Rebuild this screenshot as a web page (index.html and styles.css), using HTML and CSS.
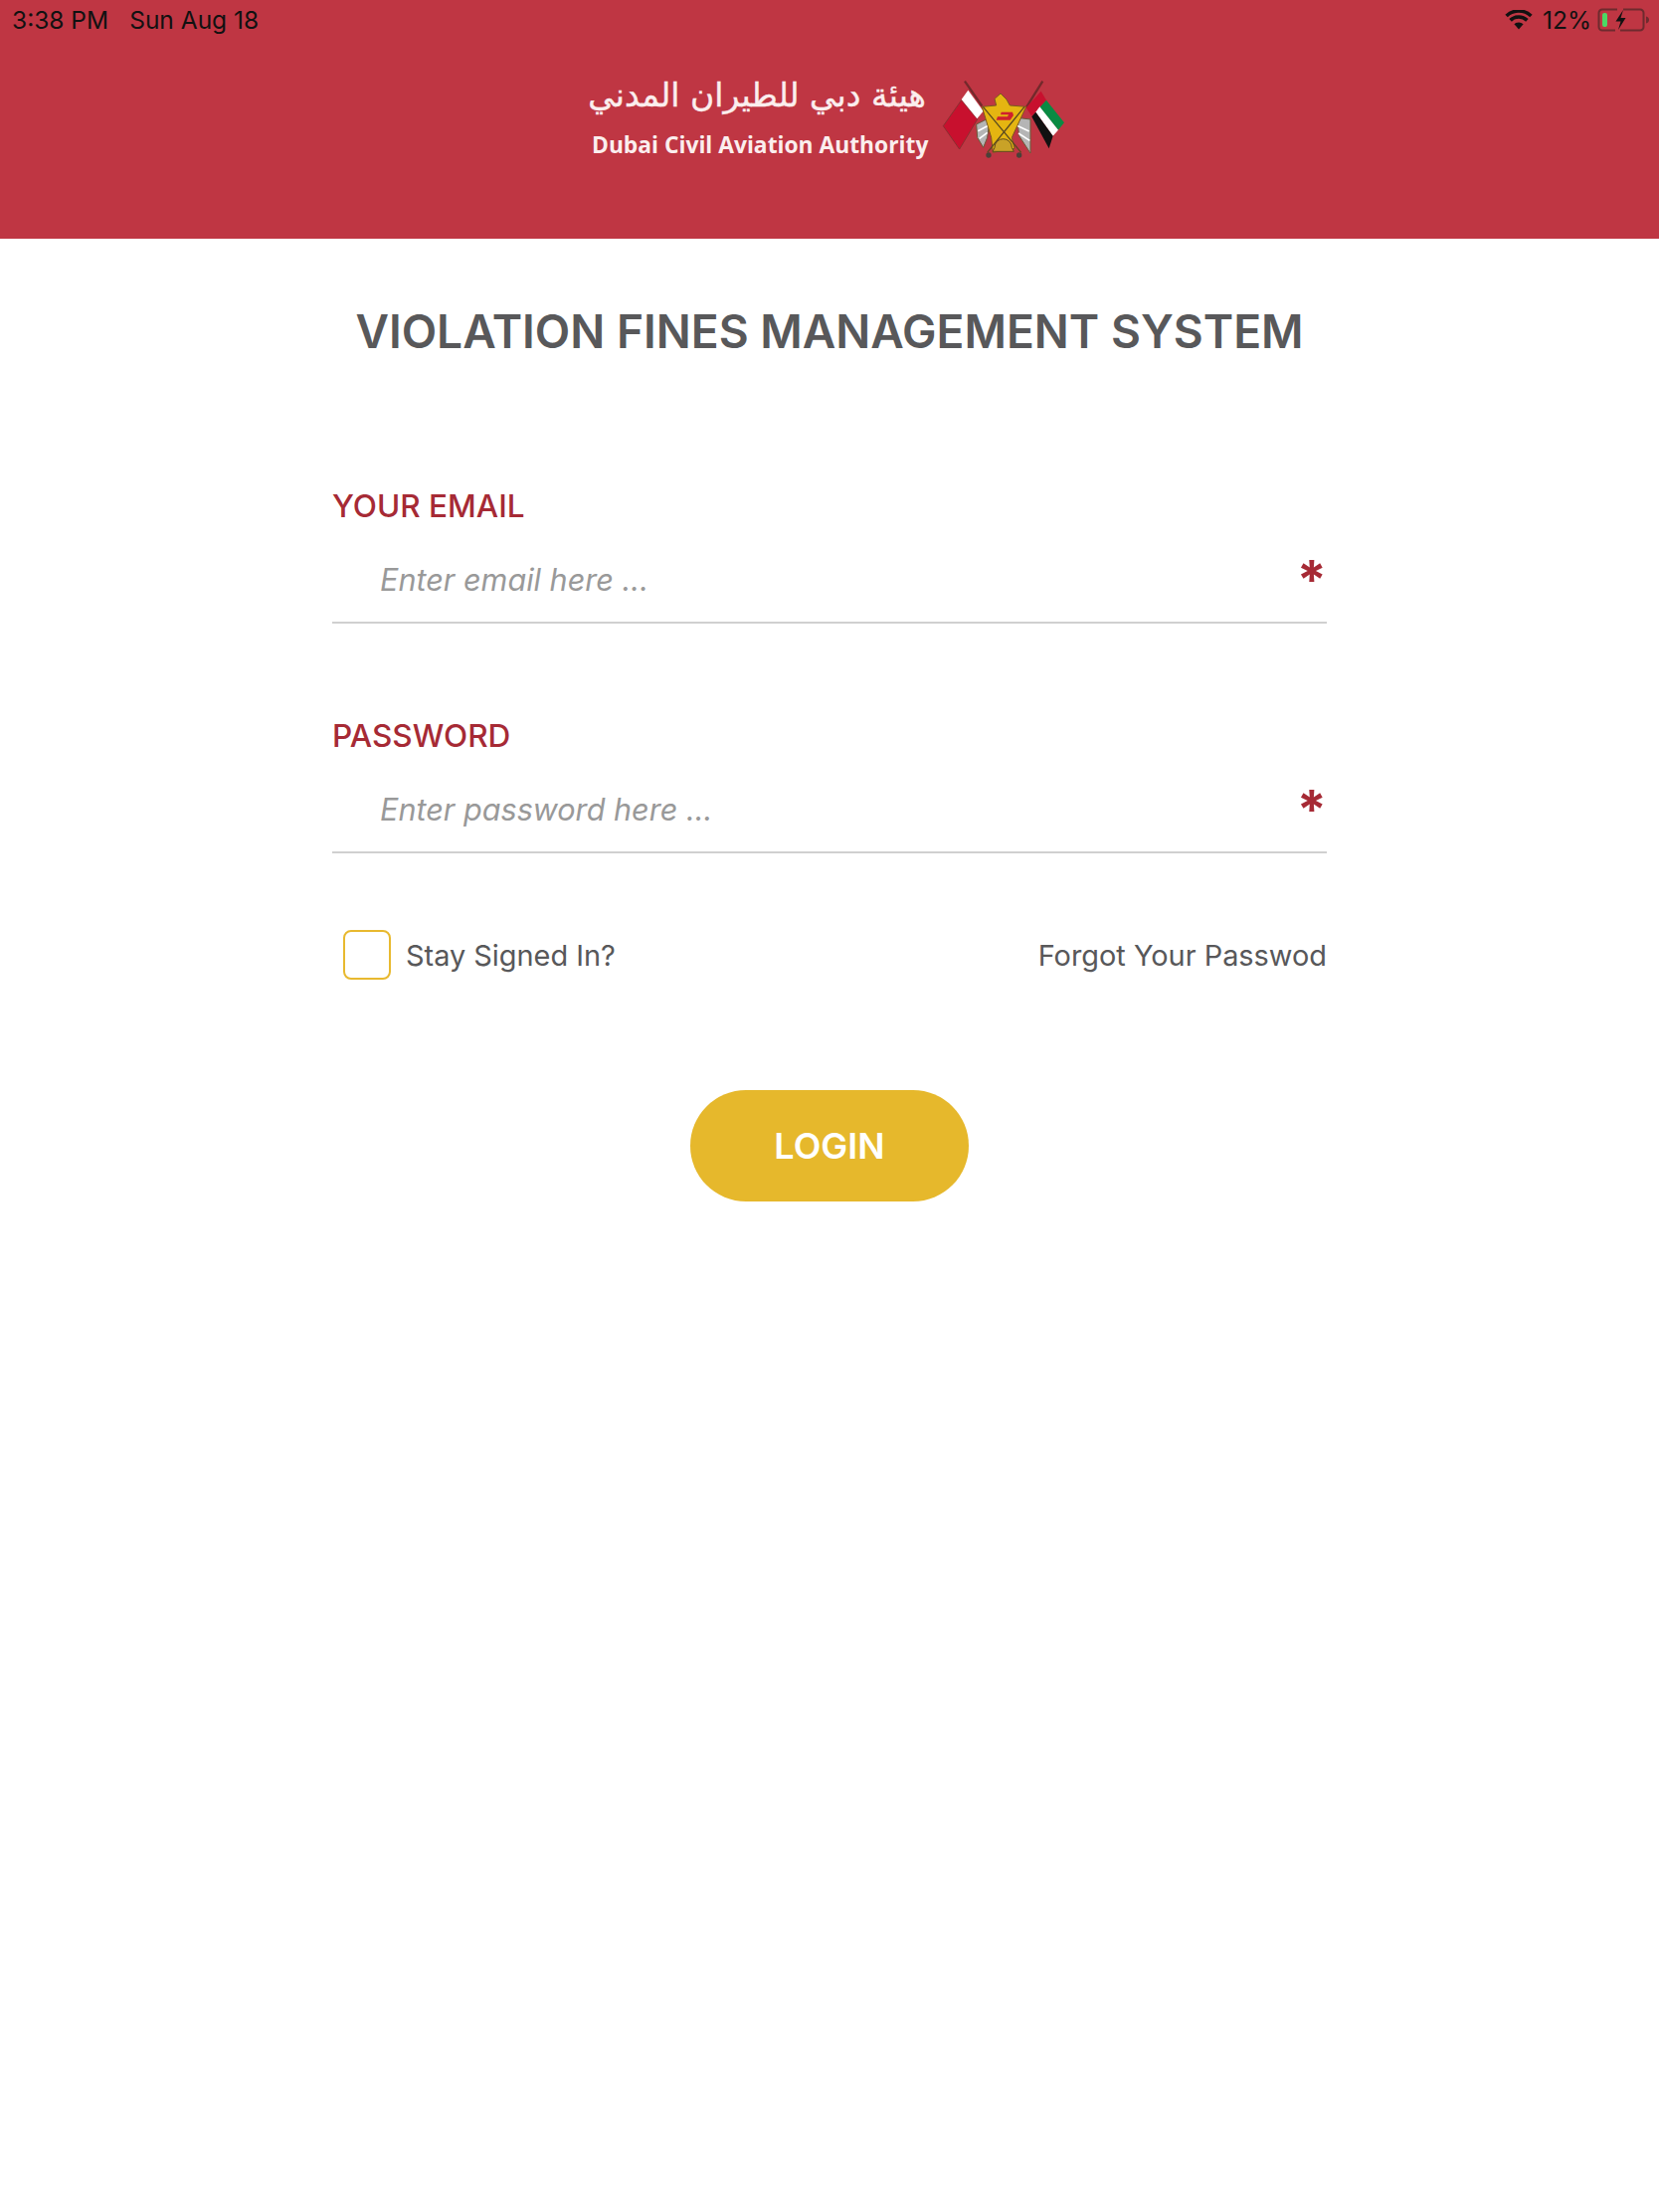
FILE: index.html
```html
<!DOCTYPE html>
<html>
<head>
  <title>Violation Fines Management System</title>
  <link rel="stylesheet" href="styles.css">
</head>
<body>
  <header class="header">
    <div class="status-bar">
      <div class="status-left">
        <span>3:38 PM</span>
        <span>Sun Aug 18</span>
      </div>
      <div class="status-right">
        <svg class="wifi" viewBox="0 0 28 20">
          <path d="M14 19.500 9.400 14.200a7 7 0 0 1 9.200 0Z" fill="#111"/>
          <path d="M5.600 10.400a12 12 0 0 1 16.800 0M1.600 6a18 18 0 0 1 24.800 0" fill="none" stroke="#111" stroke-width="3.600"/>
        </svg>
        <span>12%</span>
        <svg class="battery" viewBox="0 0 52 24">
          <path d="M20 1.500H5a3.500 3.500 0 0 0-3.500 3.500v14A3.500 3.500 0 0 0 5 22.500h13M26 1.500h17a3.500 3.500 0 0 1 3.500 3.500v14a3.500 3.500 0 0 1-3.500 3.500H23" fill="none" stroke="#6e2a2e" stroke-width="2"/>
          <rect x="5" y="5" width="5" height="14" rx="2" fill="#4cd964"/>
          <path d="M49 8.500c2 .5 3 1.500 3 3.500s-1 3-3 3.500Z" fill="#6e2a2e"/>
          <path d="M26 2 18.500 13.500h5L21 22 28.500 10h-5Z" fill="#111"/>
        </svg>
      </div>
    </div>
    <div class="logo">
      <div class="logo-text">
        <div class="logo-ar" dir="rtl">هيئة دبي للطيران المدني</div>
        <div class="logo-en">Dubai Civil Aviation Authority</div>
      </div>
      <svg class="emblem" viewBox="0 0 450 300">
        <path d="M120 35 172 110M355 35 305 115" stroke="#73292b" stroke-width="7" fill="none"/>
        <path d="M55 170 110 92 158 150 104 240Z" fill="#c8102e" stroke="#8a2f30" stroke-width="3"/>
        <path d="M110 90 130 62 176 125 157 148Z" fill="#fff"/>
        <path d="M305 115 350 65 366 92 322 140Z" fill="#c8102e"/>
        <path d="M366 92 420 160 402 182 346 114Z" fill="#0b8a43"/>
        <path d="M346 112 402 182 386 200 334 128Z" fill="#fff"/>
        <path d="M334 128 386 200 374 238 322 142Z" fill="#111"/>
        <path d="M155 165 196 145 188 205 176 235 158 205Z" fill="#b5b5b5" stroke="#6a5a3a" stroke-width="3"/>
        <path d="M318 150 278 145 284 200 318 252Z" fill="#b5b5b5" stroke="#6a5a3a" stroke-width="3"/>
        <path d="M160 185 192 168M164 208 188 190M276 168 314 186M282 192 316 214" stroke="#fff" stroke-width="5" fill="none"/>
        <path d="M210 88 228 72 246 90 256 108 305 112 262 205 270 238 205 250 200 205 172 112 215 108Z" fill="#e5b511" stroke="#7a5a1e" stroke-width="3"/>
        <path d="M230 128h34l3 10-10 14h-42l4-10h30l3-6h-24Z" fill="#cf1f2e"/>
        <path d="M175 112 290 250M300 112 188 250" stroke="#5a4a20" stroke-width="4" fill="none"/>
        <path d="M210 235a26 26 0 0 1 52 0l6 12h-64Z" fill="#c9a227" stroke="#5f4a1e" stroke-width="3"/>
        <circle cx="192" cy="258" r="8" fill="#4a4038"/>
        <circle cx="284" cy="258" r="8" fill="#4a4038"/>
      </svg>
    </div>
  </header>

  <main class="container">
    <h1 class="title">VIOLATION FINES MANAGEMENT SYSTEM</h1>

    <div class="field field-email">
      <label class="field-label" for="email">YOUR EMAIL</label>
      <div class="input-row">
        <input class="field-input" id="email" type="text" placeholder="Enter email here ...">
        <span class="required">*</span>
      </div>
    </div>

    <div class="field field-password">
      <label class="field-label" for="password">PASSWORD</label>
      <div class="input-row">
        <input class="field-input" id="password" type="text" placeholder="Enter password here ...">
        <span class="required">*</span>
      </div>
    </div>

    <div class="options">
      <label class="stay-signed">
        <span class="checkbox"></span>
        Stay Signed In?
      </label>
      <a class="forgot">Forgot Your Passwod</a>
    </div>

    <div class="actions">
      <button class="login-button">LOGIN</button>
    </div>
  </main>
</body>
</html>
```

FILE: styles.css
```css
body {
  margin: 0;
  min-height: 2224px;
  background-color: #fff;
  font-family: Inter, "Noto Sans", sans-serif;
  color: #58585a;
}

.header {
  height: 240px;
  background-color: #bf3643;
}

.status-bar {
  height: 40px;
  padding: 0 10px 0 12px;
  display: flex;
  justify-content: space-between;
  align-items: center;
  font-size: 24.5px;
  color: #111;
}

.status-left {
  display: flex;
  gap: 21px;
}

.status-right {
  display: flex;
  align-items: center;
}

.wifi {
  width: 28px;
  height: 20px;
  margin-right: 10px;
}

.battery {
  width: 52px;
  height: 24px;
  margin-left: 6px;
}

.logo {
  display: flex;
  justify-content: center;
  align-items: center;
  margin-top: 30px;
  height: 100px;
  padding-left: 4px;
}

.logo-text {
  width: 338px;
  padding-bottom: 4px;
  color: #fbeeee;
}

.logo-ar {
  font-family: "DejaVu Sans", sans-serif;
  font-size: 33px;
  line-height: 44px;
  white-space: nowrap;
  margin-right: -1px;
  -webkit-text-stroke: 0.4px #fbeeee;
}

.logo-en {
  font-family: "Open Sans", sans-serif;
  font-weight: 700;
  font-size: 22.8px;
  line-height: 34px;
  margin-top: 11px;
  padding-left: 3px;
  white-space: nowrap;
}

.emblem {
  width: 150px;
  height: 100px;
}

.container {
  width: 1000px;
  margin: 0 auto;
}

.title {
  margin: 0;
  padding-top: 63px;
  font-size: 46.1px;
  line-height: 60px;
  font-weight: 600;
  text-align: center;
  white-space: nowrap;
}

.field-email {
  margin-top: 127px;
}

.field-password {
  margin-top: 94px;
}

.field-label {
  display: block;
  font-size: 31.5px;
  line-height: 38px;
  font-weight: 550;
  color: #a62a35;
}

.input-row {
  display: flex;
  height: 97px;
  align-items: center;
  border-bottom: 2px solid #d0d0d0;
}

.field-input {
  flex: 1;
  border: none;
  outline: none;
  padding: 12px 0 0 48px;
  font-family: Inter, sans-serif;
  font-size: 30.6px;
  font-style: italic;
  background: transparent;
}

.field-input::placeholder {
  color: #999;
  opacity: 1;
}

.required {
  align-self: flex-start;
  margin-top: 28px;
  font-size: 54px;
  line-height: 54px;
  font-weight: 700;
  color: #a62a35;
}

.options {
  display: flex;
  justify-content: space-between;
  align-items: center;
  margin-top: 77px;
  font-size: 28.9px;
}

.stay-signed {
  display: flex;
  align-items: center;
  gap: 15px;
  padding-left: 11px;
}

.checkbox {
  width: 44px;
  height: 46px;
  border: 2px solid #e8b92f;
  border-radius: 8px;
}

.actions {
  display: flex;
  justify-content: center;
  margin-top: 111px;
}

.login-button {
  width: 280px;
  height: 112px;
  border: none;
  border-radius: 56px;
  background-color: #e6b82c;
  color: #fff;
  font-family: Inter, sans-serif;
  font-size: 36px;
  font-weight: 600;
}
```
